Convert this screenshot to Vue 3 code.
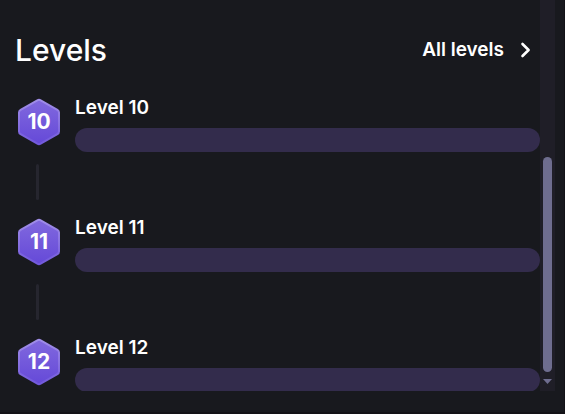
<script setup>
const levels = [10, 11, 12]
</script>

<template>
  <main class="panel">
    <div class="viewport">
      <section class="content">
        <header class="header">
          <h2 class="title">Levels</h2>
          <a class="all" href="#levels">
            <span>All levels</span>
            <svg class="chevron" viewBox="0 0 12 16" aria-hidden="true">
              <path d="M2.5 2 8.6 8 2.5 14" />
            </svg>
          </a>
        </header>
        <ol id="levels" class="list">
          <li v-for="level in levels" :key="level" class="level">
            <div class="rail">
              <div class="badge">
                <svg class="hexagon" viewBox="0 0 42 48" aria-hidden="true">
                  <defs>
                    <linearGradient :id="`fill-${level}`" x1="0" y1="0" x2="0" y2="1">
                      <stop offset="0" stop-color="#8169de" />
                      <stop offset="1" stop-color="#6549d8" />
                    </linearGradient>
                    <linearGradient :id="`edge-${level}`" x1="0" y1="0" x2="0" y2="1">
                      <stop offset="0" stop-color="#a08de8" />
                      <stop offset="1" stop-color="#7259dc" />
                    </linearGradient>
                  </defs>
                  <path
                    d="M19.3 2.3Q21 1.4 22.7 2.3L39.4 11.8Q41 12.7 41 14.4V33.6Q41 35.3 39.4 36.2L22.7 45.7Q21 46.6 19.3 45.7L2.6 36.2Q1 35.3 1 33.6V14.4Q1 12.7 2.6 11.8Z"
                    :fill="`url(#fill-${level})`"
                    :stroke="`url(#edge-${level})`"
                    stroke-width="2"
                  />
                </svg>
                <span class="number">{{ level }}</span>
              </div>
              <span class="connector"></span>
            </div>
            <div class="detail">
              <h3 :id="`level-${level}`" class="name">Level {{ level }}</h3>
              <div
                class="progress"
                role="progressbar"
                :aria-labelledby="`level-${level}`"
                aria-valuemin="0"
                aria-valuemax="100"
                aria-valuenow="0"
              ></div>
            </div>
          </li>
        </ol>
      </section>
      <div class="track" aria-hidden="true">
        <span class="before"></span>
        <span class="thumb"></span>
        <svg class="arrow" viewBox="0 0 9 5"><path d="M0 0H9L4.5 5Z" /></svg>
      </div>
    </div>
  </main>
</template>

<style>
body {
  background: #18191e;
}
</style>

<style scoped>
.panel {
  box-sizing: border-box;
  height: 100vh;
  padding: 0 9px 21px 0;
  border: solid #131217;
  border-width: 0 1px 2px 0;
  background: #18191e;
  color: #fff;
  font-family: Inter, "Liberation Sans", sans-serif;
}

.viewport {
  display: flex;
  height: 100%;
  overflow: hidden;
}

.content {
  flex: 1;
  min-width: 0;
  padding: 32px 0 0 15px;
}

.header {
  display: flex;
  align-items: center;
  justify-content: space-between;
  padding-right: 8px;
}

.title {
  margin: 0;
  font-size: 30px;
  font-weight: 500;
  line-height: 36px;
}

.all {
  display: flex;
  align-items: center;
  gap: 16px;
  color: inherit;
  font-size: 19px;
  font-weight: 600;
  line-height: 26px;
  text-decoration: none;
}

.chevron {
  width: 12px;
  height: 16px;
  fill: none;
  stroke: #fff;
  stroke-width: 2.6;
  stroke-linecap: round;
  stroke-linejoin: round;
}

.list {
  margin: 0;
  padding: 27px 0 0;
  list-style: none;
}

.level {
  display: flex;
  gap: 15px;
  height: 120px;
}

.rail {
  display: flex;
  flex-direction: column;
  align-items: center;
  width: 45px;
  padding-top: 3px;
  box-sizing: border-box;
}

.badge {
  display: grid;
  place-items: center;
  align-self: flex-start;
  width: 48px;
}

.hexagon,
.number {
  grid-area: 1 / 1;
}

.hexagon {
  width: 42px;
  height: 48px;
}

.number {
  font-size: 21px;
  font-weight: 700;
  line-height: 24px;
}

.connector {
  width: 3px;
  height: 36px;
  margin-top: 18px;
  border-radius: 2px;
  background: #26262f;
}

.level:last-child .connector {
  display: none;
}

.detail {
  flex: 1;
}

.name {
  margin: 0 0 7px;
  font-size: 19px;
  font-weight: 600;
  line-height: 26px;
}

.progress {
  height: 24px;
  border-radius: 12px;
  background: #332c4c;
}

.track {
  display: flex;
  flex-direction: column;
  align-items: center;
  width: 15px;
  background: #1f1e27;
}

.before {
  flex: 157;
}

.thumb {
  flex: 215;
  width: 9px;
  border-radius: 5px;
  background: #6e6d8f;
}

.arrow {
  width: 9px;
  height: 5px;
  margin: 7px 0;
  fill: #6e6d8f;
}
</style>
